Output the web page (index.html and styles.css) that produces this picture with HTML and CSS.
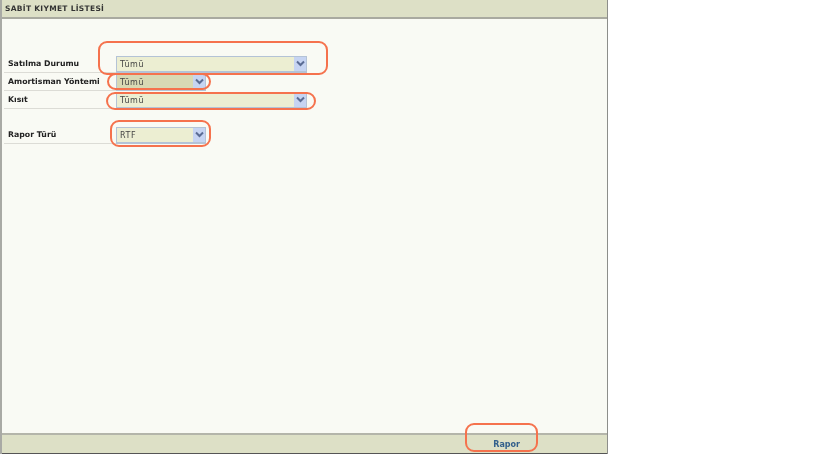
FILE: index.html
```html
<!DOCTYPE html>
<html lang="tr">
<head>
    <meta charset="UTF-8">
    <meta name="viewport" content="width=device-width, initial-scale=1.0">
    <title>Sabit Kıymet Listesi</title>
    <link rel="stylesheet" href="styles.css">
</head>
<body>
    <div class="panel">
        <div class="panel-title">SABİT KIYMET LİSTESİ</div>
        <div class="panel-body">
            <div class="row row-first">
                <span class="row-label">Satılma Durumu</span>
                <div class="select select-wide"><span class="select-value">Tümü</span><span class="select-arrow"><svg width="9" height="7" viewBox="0 0 9 7"><path d="M1 1.5l3.5 3.5L8 1.5" fill="none" stroke="#5a6c94" stroke-width="2"/></svg></span></div>
            </div>
            <div class="row">
                <span class="row-label">Amortisman Yöntemi</span>
                <div class="select select-narrow select-dark"><span class="select-value">Tümü</span><span class="select-arrow"><svg width="9" height="7" viewBox="0 0 9 7"><path d="M1 1.5l3.5 3.5L8 1.5" fill="none" stroke="#5a6c94" stroke-width="2"/></svg></span></div>
            </div>
            <div class="row">
                <span class="row-label">Kısıt</span>
                <div class="select select-wide"><span class="select-value">Tümü</span><span class="select-arrow"><svg width="9" height="7" viewBox="0 0 9 7"><path d="M1 1.5l3.5 3.5L8 1.5" fill="none" stroke="#5a6c94" stroke-width="2"/></svg></span></div>
            </div>
            <div class="row row-report">
                <span class="row-label">Rapor Türü</span>
                <div class="select select-narrow"><span class="select-value">RTF</span><span class="select-arrow"><svg width="9" height="7" viewBox="0 0 9 7"><path d="M1 1.5l3.5 3.5L8 1.5" fill="none" stroke="#5a6c94" stroke-width="2"/></svg></span></div>
            </div>
        </div>
        <div class="panel-footer"><span class="report-link">Rapor</span></div>
    </div>

    <div class="mark mark-1"></div>
    <div class="mark mark-2"></div>
    <div class="mark mark-3"></div>
    <div class="mark mark-4"></div>
    <div class="mark mark-5"></div>
</body>
</html>
```

FILE: styles.css
```css
body {
    margin: 0;
    background: white;
    font-family: "DejaVu Sans", Verdana, sans-serif;
    color: #222;
    overflow: hidden;
}

.panel {
    width: 605px;
    height: 454px;
    display: flex;
    flex-direction: column;
    background: #f9faf4;
    border-left: 2px solid #a9aaa5;
    border-right: 1px solid #8d8e8a;
}

.panel-title {
    height: 17px;
    line-height: 17px;
    padding-left: 3px;
    background: #dde0c6;
    border-bottom: 2px solid #a9aaa0;
    font-size: 7.5px;
    font-weight: bold;
    letter-spacing: 0.3px;
    color: #333;
    filter: blur(0.4px);
}

.panel-body {
    flex: 1;
    padding-top: 36px;
}

.row {
    display: flex;
    align-items: center;
    height: 18px;
}

.row-report {
    margin-top: 17px;
}

.row-label {
    flex: none;
    width: 112px;
    height: 17px;
    line-height: 15px;
    padding-left: 4px;
    margin-left: 2px;
    box-sizing: border-box;
    border-bottom: 1px solid #dcdcd6;
    font-size: 7.8px;
    font-weight: bold;
    white-space: nowrap;
    color: #222;
    filter: blur(0.4px);
}

.select {
    height: 17px;
    display: flex;
    box-sizing: border-box;
    border: 1px solid #b4c3d6;
    border-bottom-width: 2px;
    background: #eceed2;
}

.select-wide {
    width: 191px;
}

.select-narrow {
    width: 90px;
}

.select-dark {
    background: #d8d9b4;
}

.select-value {
    flex: 1;
    padding-left: 3px;
    line-height: 15px;
    font-size: 8px;
    letter-spacing: 0.6px;
    color: #444;
    filter: blur(0.4px);
}

.select-arrow {
    width: 12px;
    display: flex;
    align-items: center;
    justify-content: center;
    background: #c6d4f2;
}

.panel-footer {
    height: 18px;
    display: flex;
    justify-content: flex-end;
    align-items: center;
    padding-right: 87px;
    background: #dde0c6;
    border-top: 2px solid #b4b5aa;
    border-bottom: 1px solid #555;
}

.report-link {
    font-size: 8px;
    font-weight: bold;
    color: #33608c;
    filter: blur(0.4px);
}

/* red annotation outlines over the form */
.mark {
    position: absolute;
    box-sizing: border-box;
    border: 2px solid #f5724d;
    border-radius: 9px;
    filter: blur(0.3px);
}

.mark-1 {
    left: 98px;
    top: 41px;
    width: 230px;
    height: 34px;
}

.mark-2 {
    left: 107px;
    top: 73px;
    width: 104px;
    height: 17px;
}

.mark-3 {
    left: 106px;
    top: 92px;
    width: 210px;
    height: 18px;
}

.mark-4 {
    left: 110px;
    top: 120px;
    width: 101px;
    height: 27px;
}

.mark-5 {
    left: 465px;
    top: 423px;
    width: 73px;
    height: 29px;
}
```
